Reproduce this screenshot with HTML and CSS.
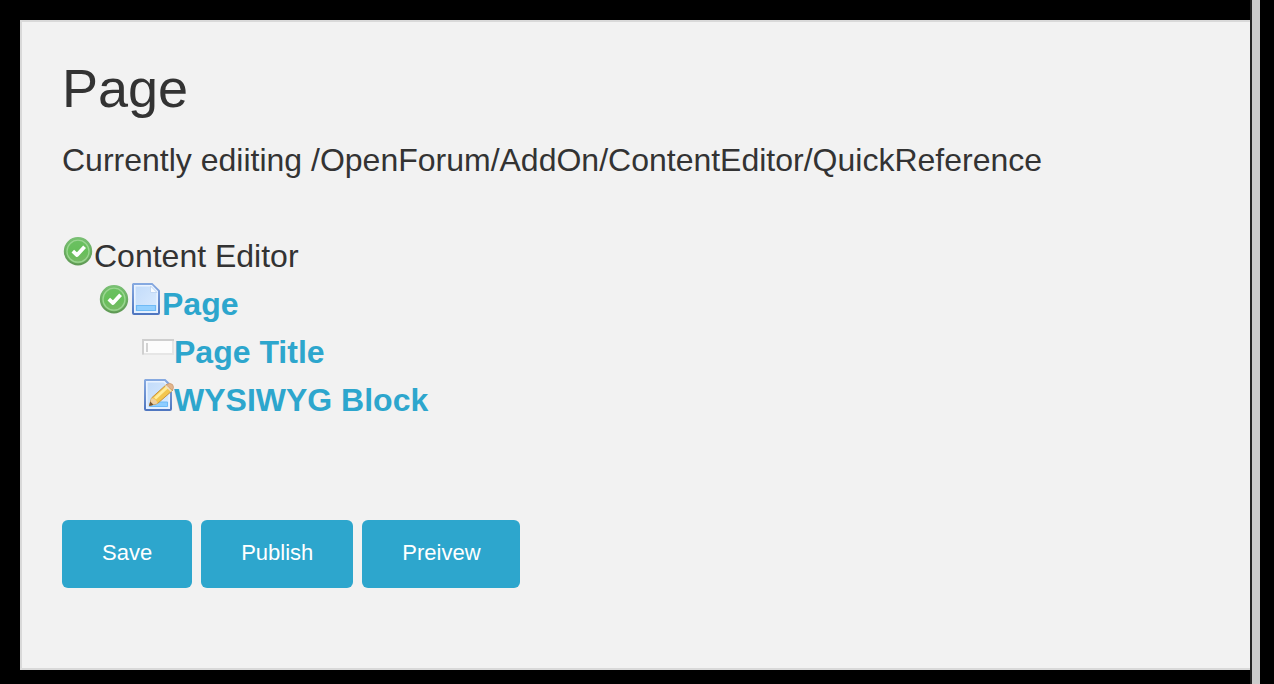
FILE: index.html
```html
<!DOCTYPE html>
<html lang="en">
<head>
<meta charset="utf-8">
<title>Page</title>
<link rel="stylesheet" href="styles.css">
</head>
<body>
<svg class="defs" aria-hidden="true">
  <defs>
    <linearGradient id="green" x1="0" y1="0" x2="0" y2="1"><stop offset="0" stop-color="#6cc163"/><stop offset=".5" stop-color="#66bf5a"/><stop offset="1" stop-color="#7cb968"/></linearGradient>
    <linearGradient id="rim" x1="0" y1="0" x2="0" y2="1"><stop offset="0" stop-color="#7abf74"/><stop offset="1" stop-color="#5f9a55"/></linearGradient>
    <linearGradient id="paper" x1="0" y1="0" x2="1" y2="1"><stop offset="0" stop-color="#c0daf9"/><stop offset="1" stop-color="#dcecff"/></linearGradient>
    <linearGradient id="edge" x1="0" y1="0" x2="0" y2="1"><stop offset="0" stop-color="#86a9e0"/><stop offset="1" stop-color="#4f76c0"/></linearGradient>
    <symbol id="tick" viewBox="0 0 32 32">
      <circle cx="16" cy="16.200" r="13.200" fill="url(#green)" stroke="url(#rim)" stroke-width="2"/>
      <circle cx="16" cy="16.200" r="11" fill="none" stroke="#9bd592" stroke-width="1.300"/>
      <path d="M10.800 16.200l4.200 3.800 7.600-8.200" fill="none" stroke="#fff" stroke-width="3.800" stroke-linejoin="round"/>
    </symbol>
    <symbol id="sheet" viewBox="0 0 32 32">
      <path d="M3.500 1H22l7 7v22q0 1-1 1H4q-1 0-1-1V1.500z" fill="url(#paper)" stroke="url(#edge)" stroke-width="2"/>
      <path d="M4.800 29V2.800H21.500l5.700 5.700V29z" fill="none" stroke="#eaf3ff" stroke-width="1.600"/>
      <path d="M20.500 3v6.500h6.500z" fill="#f8fbff" stroke="#c2d8f4"/>
      <path d="M6.500 22.500h19v5h-19z" fill="#93d0ff" stroke="#6fbaf5" stroke-width="1.200"/>
    </symbol>
  </defs>
</svg>
<main class="panel">
  <h2 class="title">Page</h2>
  <p class="intro">Currently ediiting /OpenForum/AddOn/ContentEditor/QuickReference</p>
  <ul class="tree">
    <li class="row"><svg class="icon"><use href="#tick"/></svg><span>Content Editor</span></li>
    <li class="row row-page"><svg class="icon"><use href="#tick"/></svg><svg class="icon"><use href="#sheet"/></svg><a class="link">Page</a></li>
    <li class="row row-block"><svg class="icon" viewBox="0 0 32 32"><path d="M1 9h30v14H1z" fill="#fcfcfc" stroke="#e6e6e6" stroke-width="2"/><path d="M1 23.500V9h31" fill="none" stroke="#cecece" stroke-width="1.800"/><path d="M5 12v9" stroke="#cecece" stroke-width="1.800"/></svg><a class="link">Page Title</a></li>
    <li class="row row-block"><svg class="icon" viewBox="0 0 32 32"><path d="M3.500 1H23l6 6v23q0 1-1 1H4q-1 0-1-1V1.500z" fill="url(#paper)" stroke="url(#edge)" stroke-width="2"/><path d="M4.800 29V2.800H22l5.200 5.700V29z" fill="none" stroke="#eaf3ff" stroke-width="1.600"/><path d="M15 23h10.500v4.500h-18z" fill="#8dcdff" stroke="#6fbaf5"/><path d="M7.500 26.500l2-7.500L25 5l6 6-15.500 13.500z" fill="#f3c64f" stroke="#c8923e"/><path d="M12 18.500L25 6.500l2 2-13 12z" fill="#ffec9b"/><path d="M7.500 26.500l2-7.500q5 1 6 5.500z" fill="#efd0a0"/><path d="M7 27l1.300-4.500 3.200 3.200z" fill="#77542f"/><path d="M24 6q3.500-3 6.500-.5 2 2.500 0 6z" fill="#e2b58c" stroke="#c99a70" stroke-width=".7"/><path d="M23.500 6.500l6 6" stroke="#ede1c9" stroke-width="1.500"/></svg><a class="link">WYSIWYG Block</a></li>
  </ul>
  <div class="actions">
    <button class="button">Save</button>
    <button class="button">Publish</button>
    <button class="button button-preview">Preivew</button>
  </div>
</main>
<div class="scrollbar"></div>
</body>
</html>
```
FILE: styles.css
```css
* { box-sizing: border-box; }
body {
  margin: 0;
  height: 684px;
  padding-left: 20px;
  display: flex;
  overflow: hidden;
  background: #000;
  color: #333;
  font: 32px/48px "Liberation Sans", Arial, sans-serif;
}
.defs { position: absolute; width: 0; height: 0; }
.panel {
  width: 1230px;
  height: 650px;
  margin-top: 20px;
  padding: 28px 40px 0;
  background: #f2f2f2;
  border: 2px solid #d9d9d9;
  border-right: 0;
}
.title { margin: 0; font-size: 54px; line-height: 76px; font-weight: 400; }
.intro { margin: 10px 0 48px; }
.tree { margin: 0; padding: 0; list-style: none; }
.row { display: flex; height: 48px; }
.row-page { padding-left: 36px; }
.row-block { padding-left: 80px; }
.icon { width: 32px; height: 32px; margin-top: 3px; flex: none; }
.link { color: #2da6cd; font-weight: 700; }
.actions { display: flex; gap: 9px; margin-top: 96px; }
.button {
  height: 68px;
  padding: 0 40px 3px;
  border: 0;
  border-radius: 6px;
  background: #2da6cd;
  color: #fff;
  font: 22px/26px "Liberation Sans", Arial, sans-serif;
}
.button-preview { width: 158px; }
.scrollbar {
  width: 10px;
  background: #cacaca;
  border-left: 2px solid #222;
}
```
